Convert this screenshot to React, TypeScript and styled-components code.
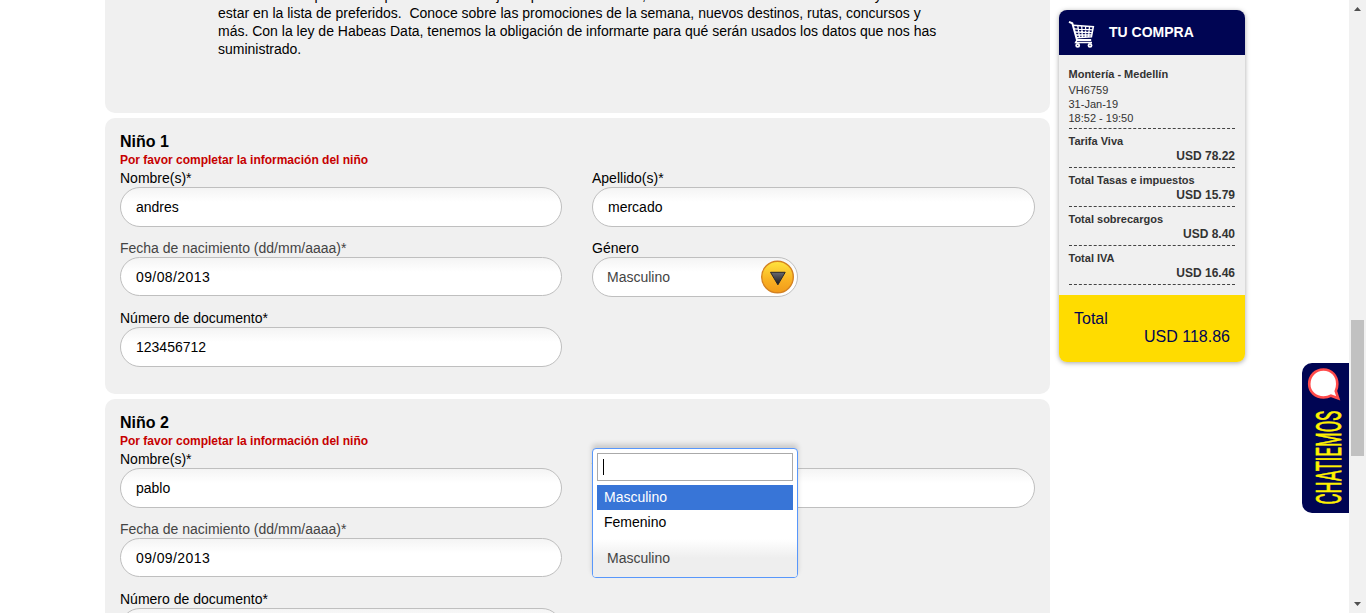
import React from "react";
import styled, { createGlobalStyle } from "styled-components";

const GlobalStyle = createGlobalStyle`
  *, *::before, *::after { box-sizing: border-box; }
  html, body { margin: 0; height: 613px; overflow: hidden; background: #fff; }
  body { font-family: "Liberation Sans", Arial, sans-serif; font-size: 14px; line-height: 18px; color: #000; }
`;

const Page = styled.div`
  display: flex;
  height: 613px;
  overflow: hidden;
  padding-left: 105px;
`;

const Main = styled.main`
  display: flex;
  flex-direction: column;
  gap: 5px;
  width: 945px;
  flex: none;
`;

const Card = styled.section`
  flex: none;
  height: 276px;
  padding: 14px 15px 0;
  border-radius: 10px;
  background: #f0f0f0;
`;

const NoticeCard = styled.section`
  flex: none;
  height: 113px;
  padding-left: 113px;
  border-radius: 0 0 10px 10px;
  background: #f0f0f0;
`;

const Notice = styled.p`
  margin: 0;
  margin-top: -14px;
  white-space: pre;
`;

const Title = styled.h2`
  margin: 0;
  font-size: 16px;
  line-height: 19px;
`;

const Warning = styled.p`
  margin: 0;
  font-size: 12px;
  line-height: 18px;
  font-weight: bold;
  color: #c60000;
`;

const Fields = styled.div`
  display: grid;
  grid-template-columns: 442px 443px;
  column-gap: 30px;
  row-gap: 12px;
`;

const Field = styled.div`
  position: relative;
  height: 58px;
`;

const Label = styled.label<{ $soft?: boolean }>`
  display: block;
  line-height: 18px;
  color: ${(p) => (p.$soft ? "#444" : "#000")};
`;

const Input = styled.input<{ $short?: boolean }>`
  display: block;
  width: 100%;
  height: ${(p) => (p.$short ? 39 : 40)}px;
  padding: 0 15px;
  border: 1px solid #bfbfbf;
  border-radius: 20px;
  background: linear-gradient(#f4f4f4 0, #fff 14px);
  font: inherit;
  letter-spacing: ${(p) => (p.$short ? "0.4px" : "normal")};
  color: #000;
  outline: none;
`;

const Select = styled.div`
  display: flex;
  align-items: center;
  justify-content: space-between;
  width: 206px;
  height: 40px;
  padding: 0 2px 0 14px;
  border: 1px solid #bfbfbf;
  border-radius: 20px;
  background: linear-gradient(#f4f4f4 0, #fff 14px);
  color: #444;
`;

const Dropdown = styled.div`
  position: absolute;
  z-index: 2;
  left: 0;
  bottom: 0;
  width: 206px;
  height: 130px;
  border: 1px solid #5897fb;
  border-radius: 4px;
  background: #fff;
  box-shadow: 0 -4px 5px rgba(0, 0, 0, 0.15);
`;

const Search = styled.div`
  display: flex;
  align-items: center;
  height: 28px;
  margin: 4px;
  padding-left: 5px;
  border: 1px solid #aaa;
`;

const Caret = styled.span`
  width: 1px;
  height: 16px;
  background: #000;
`;

const Option = styled.div<{ $active?: boolean }>`
  height: 25px;
  margin: 0 4px;
  padding-left: 7px;
  line-height: 25px;
  color: ${(p) => (p.$active ? "#fff" : "#000")};
  background: ${(p) => (p.$active ? "#3875d7" : "transparent")};
`;

const Chosen = styled.div`
  height: 38px;
  margin-top: 4px;
  padding-left: 14px;
  line-height: 39px;
  border-radius: 0 0 3px 3px;
  color: #444;
  background: linear-gradient(#fff 0, #eee 50%);
`;

const Purchase = styled.aside`
  flex: none;
  align-self: flex-start;
  width: 186px;
  height: 352px;
  margin: 10px 0 0 9px;
  border-radius: 8px;
  overflow: hidden;
  background: #f0f0f0;
  color: #333;
  box-shadow: 0 1px 5px rgba(0, 0, 0, 0.35);
`;

const PurchaseHeader = styled.header`
  display: flex;
  align-items: flex-start;
  gap: 14px;
  height: 45px;
  padding: 10px 0 0 9px;
  background: #000553;
  color: #fff;
  font-size: 14px;
  font-weight: bold;
  line-height: 25px;
`;

const Summary = styled.div`
  height: 240px;
  padding: 12px 10px 0 9.5px;
`;

const Flight = styled.div`
  height: 62px;
  border-bottom: 1px dashed #444;
  font-size: 11px;
  line-height: 14px;
`;

const Route = styled.div`
  line-height: 15px;
  padding-bottom: 1px;
  font-weight: bold;
`;

const Charge = styled.div`
  height: 39px;
  padding-top: 5px;
  border-bottom: 1px dashed #444;
  font-size: 11px;
  font-weight: bold;
  line-height: 15px;
`;

const Amount = styled.div`
  font-size: 12px;
  line-height: 14px;
  text-align: right;
`;

const Total = styled.div`
  height: 67px;
  padding: 15px 15px 0;
  background: #ffdc00;
  color: #000553;
  font-size: 16px;
  line-height: 18px;
`;

const TotalAmount = styled.div`
  text-align: right;
`;

const ChatTab = styled.div`
  flex: none;
  width: 47px;
  height: 150px;
  margin: 363px 0 0 auto;
  border-radius: 10px 0 0 10px;
  background: #000553;
`;

const Scrollbar = styled.div`
  display: flex;
  flex: none;
  flex-direction: column;
  align-items: center;
  justify-content: space-between;
  width: 17px;
  height: 613px;
  background: #f1f1f1;
`;

const Thumb = styled.div`
  width: 13px;
  height: 136px;
  margin-top: 303px;
  margin-bottom: auto;
  background: #c1c1c1;
`;

const Arrow = styled.svg`
  display: block;
  flex: none;
  width: 17px;
  height: 17px;
`;

const ArrowButton = () => (
  <svg width="35" height="34" viewBox="0 0 35 34">
    <defs>
      <linearGradient id="gold" x1="0" y1="0" x2="0" y2="1">
        <stop offset="0" stopColor="#ffe53e" />
        <stop offset="0.6" stopColor="#f9b022" />
        <stop offset="1" stopColor="#f19a1a" />
      </linearGradient>
      <linearGradient id="steel" x1="0" y1="0" x2="0" y2="1">
        <stop offset="0" stopColor="#6a6a70" />
        <stop offset="1" stopColor="#16161c" />
      </linearGradient>
    </defs>
    <circle cx="17.5" cy="17" r="15.8" fill="url(#gold)" stroke="#d48222" strokeWidth="1.4" />
    <path d="M10.5 12.3H25.2L17.9 24.8Z" fill="url(#steel)" stroke="#26262a" strokeWidth="1" />
  </svg>
);

const Cart = () => (
  <svg width="27" height="28" viewBox="0 0 27 28" fill="none" stroke="#fff">
    <path d="M1 1.8L4.3 3.3L9 20H23.2" strokeWidth="2" />
    <path d="M5 5.3L25.3 6.8L23.4 16.8L8.2 17.7" strokeWidth="1.6" />
    <path d="M6 8.8L24.7 9.8M7 12L24 12.7M7.8 15L23.5 15M9.8 5.7L11.5 17.5M13.7 6L14.4 17.5M17.6 6.2L17.5 17.3M21.5 6.5L20.5 17" strokeWidth="1.3" />
    <path d="M9 20L7.6 22.6H24" strokeWidth="1.5" />
    <circle cx="9.7" cy="25.4" r="1.5" strokeWidth="1.9" />
    <circle cx="22" cy="25.4" r="1.5" strokeWidth="1.9" />
  </svg>
);

type Child = { title: string; name: string; surname: string; birth: string; doc: string; open?: boolean };

const ChildForm = ({ title, name, surname, birth, doc, open }: Child) => (
  <Card>
    <Title>{title}</Title>
    <Warning>Por favor completar la información del niño</Warning>
    <Fields>
      <Field>
        <Label>Nombre(s)*</Label>
        <Input readOnly value={name} />
      </Field>
      <Field>
        <Label>Apellido(s)*</Label>
        <Input readOnly value={surname} />
      </Field>
      <Field>
        <Label $soft>Fecha de nacimiento (dd/mm/aaaa)*</Label>
        <Input readOnly $short value={birth} />
      </Field>
      <Field>
        {open ? (
          <Dropdown>
            <Search>
              <Caret />
            </Search>
            <Option $active>Masculino</Option>
            <Option>Femenino</Option>
            <Chosen>Masculino</Chosen>
          </Dropdown>
        ) : (
          <>
            <Label>Género</Label>
            <Select>
              Masculino
              <ArrowButton />
            </Select>
          </>
        )}
      </Field>
      <Field>
        <Label>Número de documento*</Label>
        <Input readOnly value={doc} />
      </Field>
    </Fields>
  </Card>
);

const charges = [
  ["Tarifa Viva", "USD 78.22"],
  ["Total Tasas e impuestos", "USD 15.79"],
  ["Total sobrecargos", "USD 8.40"],
  ["Total IVA", "USD 16.46"],
];

const notice = [
  "Autoriza el uso podrás ser parte de estas mejores precios sin costos, además de tener todos los destinos y",
  "estar en la lista de preferidos.  Conoce sobre las promociones de la semana, nuevos destinos, rutas, concursos y",
  "más. Con la ley de Habeas Data, tenemos la obligación de informarte para qué serán usados los datos que nos has",
  "suministrado.",
].join("\n");

export default function App() {
  return (
    <>
      <GlobalStyle />
      <Page>
        <Main>
          <NoticeCard>
            <Notice>{notice}</Notice>
          </NoticeCard>
          <ChildForm title="Niño 1" name="andres" surname="mercado" birth="09/08/2013" doc="123456712" />
          <ChildForm title="Niño 2" name="pablo" surname="" birth="09/09/2013" doc="" open />
        </Main>
        <Purchase>
          <PurchaseHeader>
            <Cart />
            TU COMPRA
          </PurchaseHeader>
          <Summary>
            <Flight>
              <Route>Montería - Medellín</Route>
              <div>VH6759</div>
              <div>31-Jan-19</div>
              <div>18:52 - 19:50</div>
            </Flight>
            {charges.map(([label, amount]) => (
              <Charge key={label}>
                {label}
                <Amount>{amount}</Amount>
              </Charge>
            ))}
          </Summary>
          <Total>
            Total
            <TotalAmount>USD 118.86</TotalAmount>
          </Total>
        </Purchase>
        <ChatTab>
          <svg width="47" height="150" viewBox="0 0 47 150">
            <path
              d="M21.5 6.5C13 6.5 7.2 13 7.2 21S13.5 34.5 21.5 34.5C24.5 34.5 27 33.8 29 32.7L36.2 35.3L33.8 28C34.8 26 35.3 23.5 35.3 21C35.3 13 30 6.5 21.5 6.5Z"
              fill="#fff"
              stroke="#ff4b4b"
              strokeWidth="2.6"
            />
            <text
              transform="translate(38.5 141.5) rotate(-90) scale(0.46 1)"
              fontFamily="Roboto, sans-serif"
              fontSize="35"
              textLength="204"
              lengthAdjust="spacingAndGlyphs"
              fill="#fff200"
              stroke="#fff200"
              strokeWidth="0.7"
            >
              CHATIEMOS
            </text>
          </svg>
        </ChatTab>
        <Scrollbar>
          <Arrow viewBox="0 0 17 17">
            <path d="M5 11L8.5 7L12 11Z" fill="#505050" />
          </Arrow>
          <Thumb />
          <Arrow viewBox="0 0 17 17">
            <path d="M5 6L8.5 10L12 6Z" fill="#505050" />
          </Arrow>
        </Scrollbar>
      </Page>
    </>
  );
}
